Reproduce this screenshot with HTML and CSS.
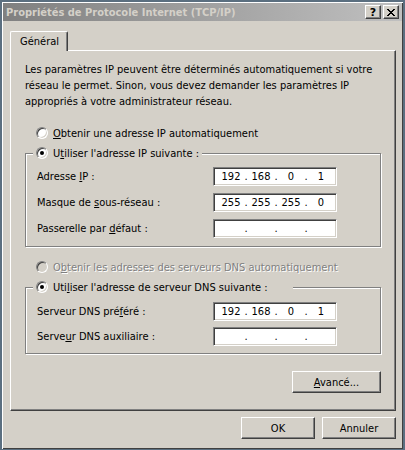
FILE: index.html
```html
<!DOCTYPE html>
<html lang="fr">
<head>
  <meta charset="UTF-8" />
  <title>Propriétés de Protocole Internet (TCP/IP)</title>
  <link rel="stylesheet" href="styles.css">
</head>
<body>
  <div class="window">
    <div class="titlebar">
      <span class="title">Propriétés de Protocole Internet (TCP/IP)</span>
      <div class="caption-btns">
        <span class="cbtn help">?</span>
        <span class="cbtn close">
          <svg width="8" height="7" viewBox="0 0 8 7"><path d="M0 0h2v1h1v1h2v-1h1v-1h2v1h-1v1h-1v1h-1v1h1v1h1v1h1v1h-2v-1h-1v-1h-2v1h-1v1h-2v-1h1v-1h1v-1h1v-1h-1v-1h-1v-1h-1z" fill="#000"/></svg>
        </span>
      </div>
    </div>

    <div class="body">
      <div class="tabs">
        <div class="tab">Général</div>
      </div>

      <div class="panel">
        <p class="intro">Les paramètres IP peuvent être déterminés automatiquement si votre réseau le permet. Sinon, vous devez demander les paramètres IP appropriés à votre administrateur réseau.</p>

        <div class="radio-row">
          <span class="radio"></span>
          <span><u>O</u>btenir une adresse IP automatiquement</span>
        </div>

        <div class="group">
          <div class="legend">
            <span class="radio checked"></span>
            <span>U<u>t</u>iliser l'adresse IP suivante :</span>
          </div>
          <div class="field-row">
            <span>Adresse <u>I</u>P :</span>
            <div class="ip"><span class="oct">192</span><span class="dot">.</span><span class="oct">168</span><span class="dot">.</span><span class="oct">0</span><span class="dot">.</span><span class="oct">1</span></div>
          </div>
          <div class="field-row">
            <span>Masque de <u>s</u>ous-réseau :</span>
            <div class="ip"><span class="oct">255</span><span class="dot">.</span><span class="oct">255</span><span class="dot">.</span><span class="oct">255</span><span class="dot">.</span><span class="oct">0</span></div>
          </div>
          <div class="field-row">
            <span>Passerelle par <u>d</u>éfaut :</span>
            <div class="ip"><span class="oct"></span><span class="dot">.</span><span class="oct"></span><span class="dot">.</span><span class="oct"></span><span class="dot">.</span><span class="oct"></span></div>
          </div>
        </div>

        <div class="radio-row disabled">
          <span class="radio"></span>
          <span>O<u>b</u>tenir les adresses des serveurs DNS automatiquement</span>
        </div>

        <div class="group dns">
          <div class="legend wide">
            <span class="radio checked"></span>
            <span>Uti<u>l</u>iser l'adresse de serveur DNS suivante :</span>
          </div>
          <div class="field-row">
            <span>Serveur DNS pré<u>f</u>éré :</span>
            <div class="ip"><span class="oct">192</span><span class="dot">.</span><span class="oct">168</span><span class="dot">.</span><span class="oct">0</span><span class="dot">.</span><span class="oct">1</span></div>
          </div>
          <div class="field-row">
            <span>Serve<u>u</u>r DNS auxiliaire :</span>
            <div class="ip"><span class="oct"></span><span class="dot">.</span><span class="oct"></span><span class="dot">.</span><span class="oct"></span><span class="dot">.</span><span class="oct"></span></div>
          </div>
        </div>

        <div class="adv-row">
          <button class="btn adv"><u>A</u>vancé...</button>
        </div>
      </div>

      <div class="footer">
        <button class="btn">OK</button>
        <button class="btn">Annuler</button>
      </div>
    </div>
  </div>
</body>
</html>
```

FILE: styles.css
```css
html, body {
  margin: 0;
  padding: 0;
  background: #5b6f80;
}
body {
  font-family: "DejaVu Sans Condensed", "DejaVu Sans", sans-serif;
  font-size: 11px;
  color: #000;
}
.window {
  width: 405px;
  height: 450px;
  box-sizing: border-box;
  background: #d4d0c8;
  border: 2px solid #5b6f80;
  border-bottom-width: 1px;
  box-shadow: inset 1px 1px 0 #fff, inset -1px -1px 0 #404040;
  padding: 1px 1px 2px 1px;
}
.titlebar {
  height: 18px;
  background: linear-gradient(to right, #808080, #c0c0c0);
  display: flex;
  align-items: center;
  justify-content: space-between;
  padding: 0 3px 0 3px;
}
.title {
  color: #d4d0c8;
  font-weight: bold;
  font-size: 11px;
}
.caption-btns {
  display: flex;
  gap: 2px;
}
.cbtn {
  width: 16px;
  height: 14px;
  box-sizing: border-box;
  background: #d4d0c8;
  border: 1px solid;
  border-color: #fff #404040 #404040 #fff;
  box-shadow: inset -1px -1px 0 #808080;
  display: flex;
  align-items: center;
  justify-content: center;
  font-weight: bold;
  font-size: 11px;
  font-family: "DejaVu Sans", sans-serif;
}
.body {
  padding: 10px 6px 0 7px;
}
.tabs {
  display: flex;
}
.tab {
  height: 19px;
  box-sizing: border-box;
  padding: 0 8px 0 9px;
  display: flex;
  align-items: center;
  background: #d4d0c8;
  border: 1px solid;
  border-color: #fff #404040 transparent #fff;
  border-bottom: none;
  border-radius: 2px 2px 0 0;
  box-shadow: inset -1px 0 0 #808080;
  margin-bottom: -1px;
  position: relative;
  z-index: 1;
  height: 20px;
}
.panel {
  height: 361px;
  box-sizing: border-box;
  border: 1px solid;
  border-color: #fff #404040 #404040 #fff;
  box-shadow: inset -1px -1px 0 #808080;
  padding: 11px 14px 0 14px;
}
.intro {
  margin: 0;
  line-height: 16px;
}
.radio-row {
  display: flex;
  align-items: center;
  gap: 5px;
  height: 16px;
  padding-left: 11px;
  margin-top: 15px;
}
.radio-row.disabled {
  color: #808080;
  text-shadow: 1px 1px 0 #fff;
  margin-top: 12px;
}
.radio {
  width: 12px;
  height: 12px;
  box-sizing: border-box;
  border-radius: 50%;
  background: #fff;
  border: 1px solid;
  border-color: #808080 #fff #fff #808080;
  box-shadow: inset 1px 1px 0 #404040, inset -1px -1px 0 #d4d0c8;
  display: inline-flex;
  align-items: center;
  justify-content: center;
  flex-shrink: 0;
}
.radio.checked::after {
  content: '';
  width: 4px;
  height: 4px;
  border-radius: 50%;
  background: #000;
}
.disabled .radio {
  background: #d4d0c8;
}
.group {
  position: relative;
  margin-top: 12px;
  border: 1px solid #808080;
  box-shadow: 1px 1px 0 #fff, inset 1px 1px 0 #fff;
  padding: 13px 43px 8px 11px;
  display: flex;
  flex-direction: column;
  gap: 7px;
}
.group.dns {
  padding-top: 14px;
  padding-bottom: 7px;
  gap: 6px;
}
.legend {
  position: absolute;
  top: -9px;
  left: 7px;
  height: 16px;
  padding: 0 3px 0 3px;
  background: #d4d0c8;
  display: flex;
  align-items: center;
  gap: 5px;
}
.legend.wide {
  width: 254px;
}
.field-row {
  display: flex;
  align-items: center;
  justify-content: space-between;
}
.ip {
  width: 124px;
  height: 19px;
  box-sizing: border-box;
  background: #fff;
  border: 1px solid;
  border-color: #808080 #fff #fff #808080;
  box-shadow: inset 1px 1px 0 #404040, inset -1px -1px 0 #d4d0c8;
  display: flex;
  align-items: center;
  padding-left: 5px;
}
.oct {
  width: 24px;
  text-align: center;
}
.dot {
  width: 6px;
  text-align: center;
}
.adv-row {
  display: flex;
  justify-content: flex-end;
  margin-top: 17px;
}
.btn {
  width: 74px;
  height: 22px;
  box-sizing: border-box;
  background: #d4d0c8;
  border: 1px solid;
  border-color: #fff #404040 #404040 #fff;
  box-shadow: inset -1px -1px 0 #808080;
  font-family: inherit;
  font-size: 11px;
  color: #000;
  padding: 0;
}
.btn.adv {
  width: 89px;
}
.footer {
  display: flex;
  justify-content: flex-end;
  gap: 7px;
  margin-top: 6px;
}
```
